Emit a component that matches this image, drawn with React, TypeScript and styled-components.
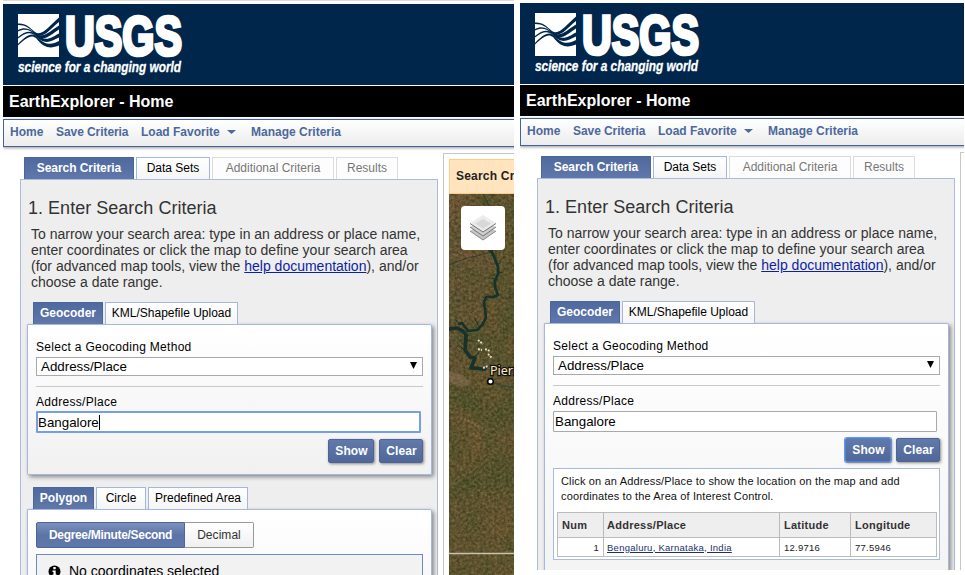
import React from "react";
import styled, { createGlobalStyle, css } from "styled-components";

const GlobalStyle = createGlobalStyle`
  *, *::before, *::after { box-sizing: border-box; }
  body { margin: 0; background: #fff; color: #000; font: 12px "Liberation Sans", Arial, sans-serif; overflow: hidden; }
`;

const Board = styled.main`
  display: grid;
  grid-template-columns: 511px 444px;
  column-gap: 6px;
  align-items: start;
  width: 965px;
  height: 575px;
  padding-left: 3px;
  overflow: hidden;
`;

const Screen = styled.section<{ $top: number; $height: number; $strip?: boolean }>`
  height: ${(p) => p.$top + p.$height}px;
  border-top: ${(p) => p.$top}px solid #fff;
  min-width: 0;
  overflow: hidden;
  ${(p) => p.$strip && css`
    border-top: 1px solid #dcdcdf;
    padding-top: 3px;
  `}
`;

const Banner = styled.header`
  height: 81px;
  background: #00264c;
  padding: 10px 0 0 15px;
  svg { display: block; }
`;

const TitleBar = styled.h1`
  margin: 1px 0 2px;
  height: 31px;
  padding-left: 6px;
  background: #000;
  color: #fff;
  font-size: 16px;
  line-height: 31px;
  font-weight: 700;
  white-space: nowrap;
`;

const Nav = styled.nav`
  display: flex;
  height: 28px;
  width: 1000px;
  padding-left: 6px;
  border: 1px solid #45639a;
  background: linear-gradient(#fff, #ececec);
  box-shadow: 0 1px 3px #999;
`;

const NavItem = styled.a<{ $width: number; $ls?: number }>`
  flex: none;
  display: flex;
  align-items: center;
  width: ${(p) => p.$width}px;
  color: #4c689c;
  font-weight: 700;
  line-height: 24px;
  padding-bottom: 2px;
  letter-spacing: ${(p) => p.$ls ?? 0}px;
  white-space: nowrap;
  svg { margin-left: 7px; }
`;

const Body = styled.div`
  display: flex;
  align-items: flex-start;
  width: 700px;
  padding-left: 17px;
`;

const Criteria = styled.div`
  flex: none;
  width: 418px;
  padding-top: 10px;
`;

const Tabs = styled.div`
  display: flex;
  gap: 2px;
  height: 22px;
`;

const MainTabs = styled(Tabs)`
  padding-left: 4px;
`;

const SubTabs = styled(Tabs)`
  padding-left: 6px;
`;

const Tab = styled.div<{ $width: number; $kind?: "active" | "muted"; $ls?: number }>`
  flex: none;
  width: ${(p) => p.$width}px;
  border: 1px solid #a3b7dd;
  border-bottom: 0;
  border-radius: 1px 1px 0 0;
  background: linear-gradient(#fff, #f5f5f5);
  line-height: 20px;
  text-align: center;
  letter-spacing: ${(p) => p.$ls ?? 0}px;
  white-space: nowrap;
  ${(p) => p.$kind === "active" && css`
    border-color: #4c659a;
    background: linear-gradient(#4f6a9f, #6077aa);
    color: #fff;
    font-weight: 700;
  `}
  ${(p) => p.$kind === "muted" && css`
    border-color: #dcdcdc;
    background: #fdfdfd;
    color: #777;
  `}
`;

const CriteriaPanel = styled.div`
  height: 420px;
  border: 1px solid #a9bbdf;
  background: #eee;
  padding: 18px 5px 0 6px;
`;

const Heading = styled.h2`
  margin: 0 0 0 1px;
  font-size: 18px;
  font-weight: 400;
  line-height: 20px;
  color: #333;
  letter-spacing: 0.02px;
  white-space: nowrap;
`;

const Intro = styled.p`
  margin: 8px 0 12px 4px;
  font-size: 14px;
  line-height: 16px;
  color: #333;
  white-space: nowrap;
`;

const Line = styled.span<{ $ls?: number }>`
  display: block;
  letter-spacing: ${(p) => p.$ls ?? 0}px;
`;

const HelpLink = styled.a`
  color: #0d1fa5;
  text-decoration: underline;
`;

const Card = styled.div<{ $height: number }>`
  height: ${(p) => p.$height}px;
  border: 1px solid #a3b7e0;
  border-radius: 0 2px 2px 2px;
  background: linear-gradient(#fff, #f1f1f1);
  box-shadow: 2px 2px 4px #888;
  padding: 13px 8px 0;
  margin-bottom: 12px;
`;

const Label = styled.label`
  display: block;
  height: 19px;
  line-height: 18px;
  letter-spacing: 0.3px;
`;

const Select = styled.div`
  display: flex;
  align-items: center;
  justify-content: space-between;
  height: 19px;
  border: 1px solid #a9a9a9;
  background: #fff;
  padding: 0 5px 0 4px;
  font-size: 13.33px;
  line-height: 16px;
  svg { margin-top: -2px; }
`;

const Rule = styled.hr`
  margin: 10px 0 6px;
  border: 0;
  border-top: 1px solid #c9c9c9;
`;

const Field = styled.div<{ $focus: boolean }>`
  display: flex;
  align-items: center;
  width: ${(p) => (p.$focus ? 385 : 384)}px;
  height: ${(p) => (p.$focus ? 22 : 21)}px;
  margin-top: ${(p) => (p.$focus ? -1 : 0)}px;
  border: ${(p) => (p.$focus ? "2px solid #769ee3" : "1px solid #a9a9a9")};
  border-radius: 1px;
  background: #fff;
  padding-left: ${(p) => (p.$focus ? 0 : 1)}px;
  font-size: 13.33px;
`;

const Caret = styled.i`
  width: 1px;
  height: 15px;
  background: #000;
`;

const Actions = styled.div`
  display: flex;
  justify-content: flex-end;
  gap: 5px;
  margin-top: 6px;
`;

const Button = styled.button<{ $width: number; $focus?: boolean }>`
  width: ${(p) => p.$width}px;
  height: 24px;
  padding: 0 0 1px 1px;
  border: 1px solid ${(p) => (p.$focus ? "#4a82dc" : "#4c6594")};
  border-radius: 2px;
  background: linear-gradient(#6179ab, #4f6899);
  box-shadow: 1px 1px 3px #888${(p) => (p.$focus ? ", 0 0 0 1px #6a9bea" : "")};
  color: #fff;
  font: 700 12px "Liberation Sans", Arial, sans-serif;
  letter-spacing: 0.1px;
`;

const Results = styled.div`
  height: 92px;
  margin-top: 6px;
  border: 1px solid #a9bbdf;
  background: #fff;
  padding: 5px 3px 0;
`;

const Hint = styled.p`
  margin: 0 0 8px 4px;
  font-size: 11px;
  line-height: 15px;
  color: #111;
  white-space: nowrap;
`;

const Table = styled.table`
  border-collapse: collapse;
  table-layout: fixed;
  width: 379px;
  letter-spacing: 0.26px;
  th, td { border: 1px solid #bbb; padding: 0 4px; text-align: left; white-space: nowrap; }
  th { height: 25px; background: #eee; color: #333; font-size: 11px; }
  td { height: 19px; background: #fff; color: #222; font-size: 9.5px; }
  td:first-child { text-align: right; }
  th:nth-child(2), td:nth-child(2) { padding-left: 3px; }
  a { color: #1c2f6b; text-decoration: underline; }
`;

const Units = styled.div`
  display: flex;
  width: 218px;
  height: 26px;
  margin-top: -1px;
`;

const Unit = styled.div<{ $on?: boolean; $width: number }>`
  width: ${(p) => p.$width}px;
  border: 1px solid ${(p) => (p.$on ? "#4c659a" : "#999")};
  border-left-width: ${(p) => (p.$on ? 1 : 0)}px;
  border-radius: ${(p) => (p.$on ? "2px 0 0 2px" : "0 2px 2px 0")};
  background: ${(p) => (p.$on ? "linear-gradient(#7b90bb, #5c74a8 50%, #5f77aa)" : "linear-gradient(#fff, #f0f0f0)")};
  color: ${(p) => (p.$on ? "#fff" : "#333")};
  font-weight: ${(p) => (p.$on ? 700 : 400)};
  line-height: 24px;
  text-align: center;
  letter-spacing: ${(p) => (p.$on ? -0.31 : 0.05)}px;
`;

const Notice = styled.div`
  display: flex;
  align-items: flex-start;
  height: 60px;
  margin-top: 6px;
  border: 1px solid #6a8bc6;
  background: #f2f2f2;
  padding: 8px 0 0 11px;
  font-size: 14px;
  line-height: 16px;
  svg { margin: 2px 8px 0 0; }
`;

const MapColumn = styled.aside`
  flex: none;
  width: 250px;
  height: 440px;
  margin: 6px 0 0 5px;
  border: 1px solid #c6c6c6;
  padding: 5px;
`;

const MapTitle = styled.div`
  height: 35px;
  border: 1px solid #ffcb8b;
  background: #ffe4bd;
  padding-left: 6px;
  font-weight: 700;
  color: #222;
  line-height: 32px;
  letter-spacing: 0.2px;
  white-space: nowrap;
`;

const MapView = styled.div`
  position: relative;
  height: 400px;
  overflow: hidden;
  > svg { display: block; }
`;

const LayersButton = styled.div`
  position: absolute;
  left: 12px;
  top: 12px;
  display: grid;
  place-items: center;
  width: 44px;
  height: 44px;
  border-radius: 4px;
  background: #fff;
`;

function Logo() {
  return (
    <svg width="170" height="64" viewBox="0 0 170 64">
      <rect width="41" height="43" fill="#fff" />
      <g fill="#00264c">
        <path d="M0 9.500C8 9 11 13 17 18C24 23 31 12 41 3.500V8C31 16 25 26 17 19.500C11 14 8 11 0 11Z" />
        <path d="M0 16C7 12 12 15 18 19.500C26 25 33 16 41 11.500V15.500C32 21 26 29 17 20.500C12 16 7 14 0 17.500Z" />
        <path d="M0 23C7 17 13 16 19 20.500C28 29 34 23 41 19.500V23.500C33 27 27 32 18 22C13 18 8 18 0 24.500Z" />
        <path d="M0 30C8 22 13 18 19 22.500C28 33 35 30 41 27V31.500C34 34 27 36 18 24C13 20 8 24 0 31.500Z" />
      </g>
      <text x="47" y="41.200" fill="#fff" stroke="#fff" strokeWidth="3.600" fontFamily="Liberation Sans, Arial, sans-serif" fontWeight="700" fontSize="55.500" textLength="117" lengthAdjust="spacingAndGlyphs">USGS</text>
      <text x="0" y="57.500" fill="#fff" stroke="#fff" strokeWidth=".3" fontFamily="Liberation Sans, Arial, sans-serif" fontWeight="700" fontStyle="italic" fontSize="14.500" textLength="163" lengthAdjust="spacingAndGlyphs">science for a changing world</text>
    </svg>
  );
}

function Terrain() {
  return (
    <svg width="238" height="400">
      <defs>
        <filter id="grain" x="0" y="0" width="100%" height="100%" colorInterpolationFilters="sRGB">
          <feTurbulence type="fractalNoise" baseFrequency="0.35" numOctaves="4" seed="11" />
          <feColorMatrix values="1 0 0 0 -0.13  0.85 0.1 0 0 -0.14  0.6 0 0 0 -0.12  0 0 0 0 0.3" />
        </filter>
        <filter id="patches" x="0" y="0" width="100%" height="100%" colorInterpolationFilters="sRGB">
          <feTurbulence type="fractalNoise" baseFrequency="0.03" numOctaves="3" seed="4" />
          <feColorMatrix values="0.45 0 0 0 0.13  0.08 0 0 0 0.28  0.1 0 0 0 0.13  0 0 0 0 0.5" />
        </filter>
      </defs>
      <rect width="238" height="400" fill="#5a502c" />
      <path d="M0 0H26L40 40L42 75L34 110L15 140L20 170L0 190Z" fill="#6c5238" />
      <rect width="238" height="400" filter="url(#patches)" />
      <rect width="238" height="400" filter="url(#grain)" />
      <path d="M0 178L14 181L23 190L14 193L0 188Z" fill="#97765b" opacity=".45" />
      <path d="M25 230L39 237M24 239L34 246M15 225L27 230M29 296L41 303" stroke="#a17a58" strokeWidth="2" strokeDasharray="2 2" opacity=".5" />
      <g fill="none" stroke="#17312b" strokeLinecap="round" strokeLinejoin="round">
        <path d="M34 0Q42 15 46 30" stroke="#37432c" strokeWidth="1.500" />
        <path d="M42 56L46 65L49 73L49 80L46 87L46 93L49 101L44 103L37 103L35 108L37 124L33 131L28 136L19 137L13 129L10 130" strokeWidth="2.600" />
        <path d="M0 135L8 134L14 137L17 141L16 156L21 163L26 164L22 174L36 175" strokeWidth="3.600" />
        <path d="M44 61L39 56M48 71L52 68M50 79L54 78M49 86L43 84M38 115L34 111M29 131L26 125M10 130L7 126M17 158L12 153M24 165L30 158M37 106L34 103" strokeWidth="1" />
        <path d="M0 71Q15 64 28 62L42 58" strokeWidth="1" opacity=".6" />
        <path d="M41 187Q53 193 65 193L238 199" stroke="#3a4a37" strokeWidth="1.500" />
      </g>
      <path d="M29 146l5 4m-5 5l4 1m3-1l5 2m-2 3l4 4m-9 10l5 -2" stroke="#ddd4c1" strokeWidth="2" strokeDasharray="2 1" />
      <path d="M0 359.500H238" stroke="#c8c3ae" strokeWidth="1.300" />
      <circle cx="41.500" cy="187.500" r="2.800" fill="#fff" stroke="#000" strokeWidth="1.500" />
      <text x="41" y="181" fill="#ffe8bf" stroke="#111" strokeWidth="2.400" paintOrder="stroke" fontFamily="Noto Sans, sans-serif" fontSize="12.500">Pierre</text>
    </svg>
  );
}

function LayersIcon() {
  return (
    <svg width="28" height="28" viewBox="0 0 28 28">
      <path d="M1 17L14 9L27 17L14 26Z" fill="#c4c4c4" />
      <path d="M1 17L14 26L27 17" fill="none" stroke="#8a8a8a" />
      <path d="M1 13L14 5L27 13L14 22Z" fill="#cfcfcf" />
      <path d="M1 13L14 22L27 13" fill="none" stroke="#777" />
      <path d="M1 9L14 1L27 9L14 17.500Z" fill="#ececec" />
      <path d="M6 9.500L14 5L22 9.500L14 15Z" fill="#d8d8d8" />
      <path d="M1 9.500L14 18L27 9.500" fill="none" stroke="#777" />
    </svg>
  );
}

function Geocoder({ searched }: { searched: boolean }) {
  return (
    <Card $height={searched ? 300 : 151}>
      <Label>Select a Geocoding Method</Label>
      <Select>
        Address/Place
        <svg width="7" height="7"><path d="M0 0H7L3.500 7Z" /></svg>
      </Select>
      <Rule />
      <Label>Address/Place</Label>
      <Field $focus={!searched}>Bangalore{!searched && <Caret />}</Field>
      <Actions>
        <Button $width={46} $focus={searched}>Show</Button>
        <Button $width={44}>Clear</Button>
      </Actions>
      {searched && (
        <Results>
          <Hint>
            <Line $ls={0.15}>Click on an Address/Place to show the location on the map and add</Line>
            <Line $ls={0.13}>coordinates to the Area of Interest Control.</Line>
          </Hint>
          <Table>
            <colgroup><col width="46" /><col width="176" /><col width="71" /><col width="86" /></colgroup>
            <thead><tr><th>Num</th><th>Address/Place</th><th>Latitude</th><th>Longitude</th></tr></thead>
            <tbody><tr><td>1</td><td><a>Bengaluru, Karnataka, India</a></td><td>12.9716</td><td>77.5946</td></tr></tbody>
          </Table>
        </Results>
      )}
    </Card>
  );
}

function Explorer({ searched }: { searched: boolean }) {
  return (
    <Screen $top={searched ? 3 : 4} $height={searched ? 567 : 571} $strip={!searched}>
      <Banner><Logo /></Banner>
      <TitleBar>EarthExplorer - Home</TitleBar>
      <Nav>
        <NavItem $width={46}>Home</NavItem>
        <NavItem $width={85} $ls={-0.07}>Save Criteria</NavItem>
        <NavItem $width={110}>
          Load Favorite
          <svg width="9" height="4"><path d="M0 0H9L4.500 4Z" fill="#4c689c" /></svg>
        </NavItem>
        <NavItem $width={120}>Manage Criteria</NavItem>
      </Nav>
      <Body>
        <Criteria>
          <MainTabs>
            <Tab $width={110} $kind="active" $ls={-0.07}>Search Criteria</Tab>
            <Tab $width={74}>Data Sets</Tab>
            <Tab $width={122} $kind="muted">Additional Criteria</Tab>
            <Tab $width={62} $kind="muted">Results</Tab>
          </MainTabs>
          <CriteriaPanel>
            <Heading>1. Enter Search Criteria</Heading>
            <Intro>
              <Line>To narrow your search area: type in an address or place name,</Line>
              <Line>enter coordinates or click the map to define your search area</Line>
              <Line>(for advanced map tools, view the <HelpLink>help documentation</HelpLink>), and/or</Line>
              <Line>choose a date range.</Line>
            </Intro>
            <SubTabs>
              <Tab $width={70} $kind="active">Geocoder</Tab>
              <Tab $width={133}>KML/Shapefile Upload</Tab>
            </SubTabs>
            <Geocoder searched={searched} />
            {!searched && (
              <>
                <SubTabs>
                  <Tab $width={61} $kind="active">Polygon</Tab>
                  <Tab $width={50}>Circle</Tab>
                  <Tab $width={100}>Predefined Area</Tab>
                </SubTabs>
                <Card $height={150}>
                  <Units>
                    <Unit $on $width={149}>Degree/Minute/Second</Unit>
                    <Unit $width={69}>Decimal</Unit>
                  </Units>
                  <Notice>
                    <svg width="13" height="13">
                      <circle cx="6.500" cy="6.500" r="6" />
                      <path d="M5.300 2H7.700V4.200H5.300ZM4.500 5.500H7.700V9.500H8.700V11H4.500V9.500H5.500V7H4.500Z" fill="#fff" />
                    </svg>
                    No coordinates selected
                  </Notice>
                </Card>
              </>
            )}
          </CriteriaPanel>
        </Criteria>
        <MapColumn>
          {!searched && (
            <>
              <MapTitle>Search Criteria Summary</MapTitle>
              <MapView>
                <Terrain />
                <LayersButton><LayersIcon /></LayersButton>
              </MapView>
            </>
          )}
        </MapColumn>
      </Body>
    </Screen>
  );
}

export default function App() {
  return (
    <>
      <GlobalStyle />
      <Board>
        <Explorer searched={false} />
        <Explorer searched />
      </Board>
    </>
  );
}
